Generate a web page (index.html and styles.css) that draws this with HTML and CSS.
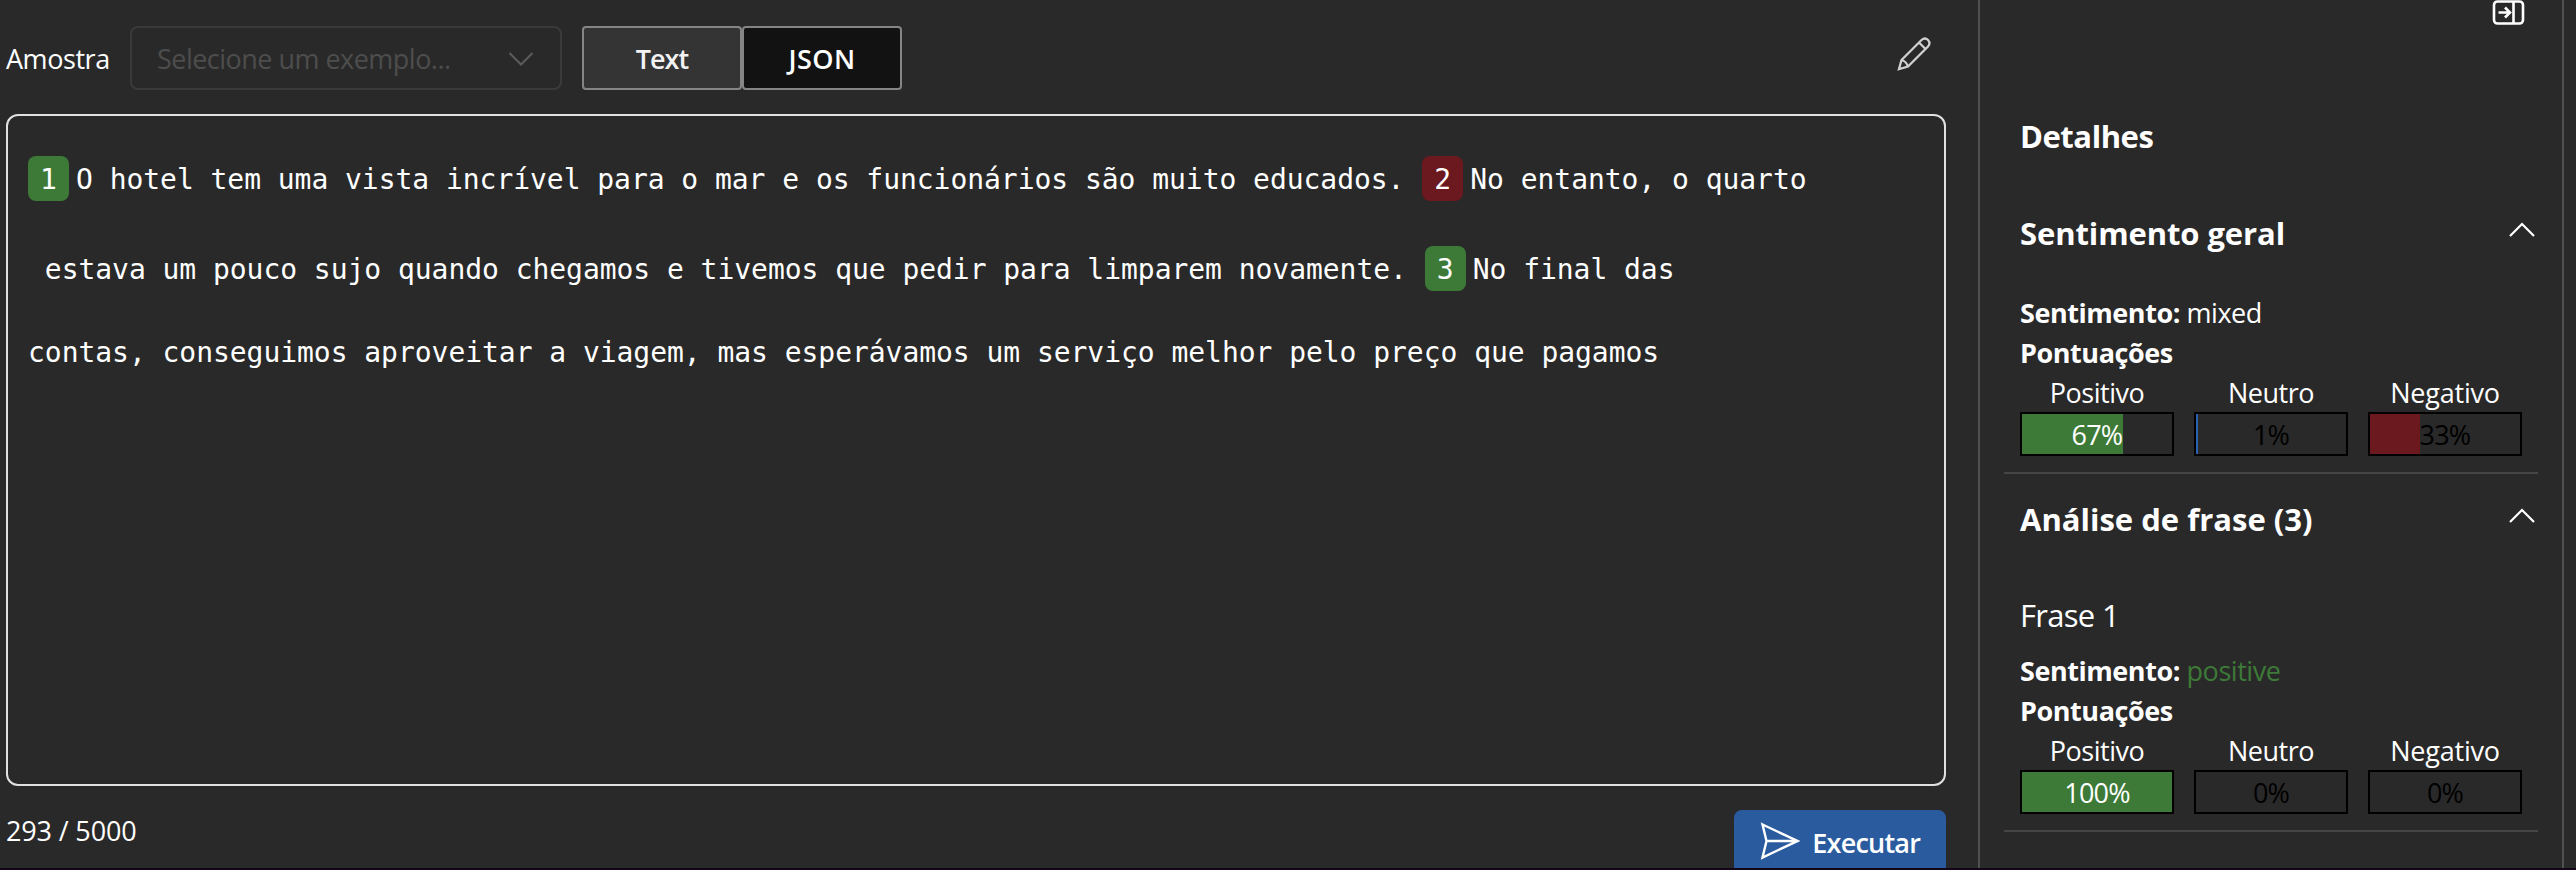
FILE: index.html
```html
<!DOCTYPE html>
<html lang="pt">
<head>
<meta charset="utf-8">
<title>Análise de sentimento</title>
<link rel="stylesheet" href="styles.css">
</head>
<body>
<div class="app">
  <main class="main">
    <div class="toolbar">
      <label class="sample-label">Amostra</label>
      <div class="select">
        <span class="placeholder">Selecione um exemplo...</span>
        <svg class="select-chevron" width="26" height="16" viewBox="0 0 26 16"><path d="M1.500 2L13 13.500L24.500 2"/></svg>
      </div>
      <div class="tabs">
        <button class="tab tab-text"><span>Text</span></button>
        <button class="tab tab-json"><span>JSON</span></button>
      </div>
      <svg class="pencil" width="34" height="34" viewBox="0 0 34 34"><path d="M2 32L4.500 23L24.500 3Q28 0 31 3Q34 6 31 9.500L11 29.500ZM22 5.500L28.500 12M4.500 23Q9 24 11 29.500"/></svg>
    </div>
    <div class="editor">
      <div class="line"><span class="badge positive first">1</span>O hotel tem uma vista incrível para o mar e os funcionários são muito educados. <span class="badge negative">2</span>No entanto, o quarto</div>
      <div class="line"> estava um pouco sujo quando chegamos e tivemos que pedir para limparem novamente. <span class="badge positive">3</span>No final das</div>
      <div class="line last">contas, conseguimos aproveitar a viagem, mas esperávamos um serviço melhor pelo preço que pagamos</div>
    </div>
    <div class="footer">
      <span class="counter">293 / 5000</span>
      <button class="run">
        <svg width="40" height="38" viewBox="0 0 40 38"><path d="M2.500 2.500L37.500 19L2.500 35.500L6.500 19ZM6.500 19H37"/></svg>
        <span>Executar</span>
      </button>
    </div>
  </main>
  <aside class="panel">
    <div class="panel-top">
      <svg width="34" height="26" viewBox="0 0 34 26"><rect x="2" y="1.500" width="29" height="22" rx="3.500"/><path d="M21.500 1.500V23.500M6.500 12.500H17.500M13 7.500L18 12.500L13 17.500"/></svg>
    </div>
    <h2 class="details">Detalhes</h2>
    <section class="section overall">
      <div class="head"><h2 class="title-overall">Sentimento geral</h2><svg width="28" height="16" viewBox="0 0 28 16"><path d="M2 14L14 2L26 14"/></svg></div>
      <div class="result">
        <p><b class="key">Sentimento:</b> <span class="mixed">mixed</span></p>
        <p><b class="scores-title">Pontuações</b></p>
        <div class="scores">
          <div class="score"><span class="pos-label">Positivo</span><div class="bar"><i class="fill green" style="width:67%"></i><em class="on">67%</em></div></div>
          <div class="score"><span class="neu-label">Neutro</span><div class="bar"><i class="fill blue" style="width:1.5%"></i><em>1%</em></div></div>
          <div class="score"><span class="neg-label">Negativo</span><div class="bar"><i class="fill red" style="width:33.3%"></i><em>33%</em></div></div>
        </div>
      </div>
    </section>
    <section class="section phrases">
      <div class="head"><h2 class="title-phrases">Análise de frase (3)</h2><svg width="28" height="16" viewBox="0 0 28 16"><path d="M2 14L14 2L26 14"/></svg></div>
      <h3>Frase 1</h3>
      <div class="result">
        <p><b class="key">Sentimento:</b> <span class="value-positive">positive</span></p>
        <p><b class="scores-title">Pontuações</b></p>
        <div class="scores">
          <div class="score"><span class="pos-label">Positivo</span><div class="bar"><i class="fill green" style="width:100%"></i><em class="on">100%</em></div></div>
          <div class="score"><span class="neu-label">Neutro</span><div class="bar"><em>0%</em></div></div>
          <div class="score"><span class="neg-label">Negativo</span><div class="bar"><em>0%</em></div></div>
        </div>
      </div>
    </section>
  </aside>
</div>
</body>
</html>
```
FILE: styles.css
```css
* { box-sizing: border-box; }
body {
  margin: 0;
  height: 870px;
  overflow: hidden;
  background: #292929;
  color: #fff;
  font: 27px/41px "Open Sans", "Noto Sans", sans-serif;
  letter-spacing: -0.45px;
}
h2, h3, p { margin: 0; }
button { padding: 0; font: inherit; color: inherit; letter-spacing: inherit; }
svg { fill: none; stroke: #fff; stroke-width: 2.2; flex: none; }
.app { display: flex; height: 870px; border-bottom: 2px solid #12051a; }

.main { width: 1978px; padding: 26px 32px 0 6px; display: flex; flex-direction: column; }
.toolbar { display: flex; height: 64px; align-items: center; }
.sample-label { width: 124px; padding-top: 1px; }
.select {
  width: 432px; height: 64px; padding: 1px 26px 0 25px;
  display: flex; align-items: center; justify-content: space-between;
  border: 2px solid #3a3a3a; border-radius: 8px; color: #4d4d4d;
}
.placeholder { letter-spacing: -0.52px; }
.select-chevron { stroke: #5c5c5c; stroke-width: 2; }
.tabs { display: flex; margin-left: 20px; }
.tab {
  width: 160px; height: 64px; padding-top: 1px;
  border: 2px solid #858585; border-radius: 4px;
  background: #343434; font-weight: 600; color: #f2f2f2; letter-spacing: -1px;
}
.tab-json { background: #121212; color: #fff; letter-spacing: 0.4px; }
.pencil { margin: 0 15px 9px auto; stroke: #d0d0d0; stroke-width: 2.300; }

.editor {
  height: 672px; margin-top: 24px; padding: 19px 20px;
  border: 2px solid #e1e1e1; border-radius: 12px;
  font-family: "DejaVu Sans Mono", monospace; font-size: 28px; letter-spacing: -0.042px;
}
.line { height: 90px; line-height: 90px; white-space: pre; }
.line.last { height: 76px; line-height: 76px; }
.badge {
  display: inline-block; width: 41px; height: 45px; line-height: 47px;
  margin: 0 7px 0 1px; border-radius: 8px; text-align: center;
}
.badge.first { margin-left: 0; }
.positive { background: #3d7a37; }
.negative { background: #6b191f; }

.footer { display: flex; justify-content: space-between; padding-top: 24px; height: 82px; overflow: hidden; }
.counter { letter-spacing: -0.15px; }
.run {
  width: 212px; height: 64px; padding: 0 26px; display: flex;
  align-items: flex-start; justify-content: space-between;
  border: 0; border-radius: 8px; background: #2a5b9e; font-weight: 600;
  letter-spacing: -0.8px;
}
.run svg { margin-top: 12px; stroke-width: 2.400; }
.run span { margin-top: 12px; }

.panel { width: 586px; padding: 0 24px; border: solid #505050; border-width: 0 2px; }
.panel-top { height: 113px; display: flex; justify-content: flex-end; padding-right: 12px; }
.panel-top svg { stroke-width: 2.600; }
h2 { height: 44px; font: 700 31px/46px "Open Sans", sans-serif; letter-spacing: -0.1px; }
.details { padding-left: 16px; letter-spacing: -0.45px; }
.title-phrases { letter-spacing: 0; }
.section { padding: 0 16px; border-bottom: 2px solid #454545; }
.overall { height: 264px; margin-top: 53px; }
.phrases { height: 358px; padding-top: 22px; }
.head { display: flex; justify-content: space-between; height: 44px; }
.head svg { margin: 12px -14px 0 0; }
.overall .result { padding-top: 38px; }
h3 { font: 400 31px/44px "Open Sans", sans-serif; letter-spacing: -0.7px; margin: 53px 0 13px; }
p { height: 40px; }
.scores { display: flex; gap: 20px; }
.score { width: 154px; text-align: center; }
.score span { display: block; height: 40px; }
.score .neg-label { letter-spacing: -0.2px; }
.bar { position: relative; height: 44px; border: 2px solid #000; }
.fill { position: absolute; inset: 0 auto 0 0; }
.bar em { position: relative; font-style: normal; color: #000; letter-spacing: -0.8px; }
.bar .on { color: #fff; }
.green { background: #3d7a37; }
.blue { background: #2a62b0; }
.red { background: #6b191f; }
.value-positive { color: #3d7a37; }
```
